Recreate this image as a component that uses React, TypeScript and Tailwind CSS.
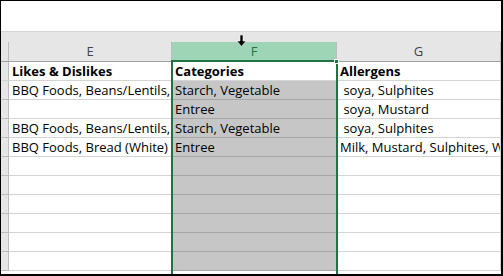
import React from 'react';

const rows: [string, string, string][] = [
  ['BBQ Foods, Beans/Lentils,', 'Starch, Vegetable', '\u00a0soya, Sulphites'],
  ['', 'Entree', '\u00a0soya, Mustard'],
  ['BBQ Foods, Beans/Lentils,', 'Starch, Vegetable', '\u00a0soya, Sulphites'],
  ['BBQ Foods, Bread (White)', 'Entree', 'Milk, Mustard, Sulphites, Wheat'],
  ['', '', ''],
  ['', '', ''],
  ['', '', ''],
  ['', '', ''],
  ['', '', ''],
  ['', '', ''],
];

const cell = 'h-full overflow-hidden whitespace-nowrap pl-[3px] leading-[18px]';

export default function App() {
  return (
    <div className="relative w-[503px] h-[276px] overflow-hidden bg-white border-l border-t border-r-2 border-b-2 border-black flex flex-col text-[13px] text-black font-['Open_Sans',sans-serif]">
      <div className="h-[31px] shrink-0 bg-white border-b border-[#d4d4d4]" />
      <div className="h-[10px] shrink-0 bg-[#e6e6e6]" />

      {/* column headers */}
      <div className="h-[20px] shrink-0 flex bg-[#e6e6e6] border-b border-[#a0a0a0] text-[#444]">
        <div className="w-[8px] border-r border-[#bdbdbd]" />
        <div className="w-[163px] border-r border-[#bdbdbd] flex items-center justify-center">E</div>
        <div className="w-[165px] bg-[#9fd5b7] border-r border-[#bdbdbd] flex items-center justify-center text-[#217346]">F</div>
        <div className="w-[164px] border-r border-[#bdbdbd] flex items-center justify-center">G</div>
      </div>

      {/* header row */}
      <div className="h-[19px] shrink-0 flex border-b border-[#d4d4d4] font-bold">
        <div className="w-[8px] bg-[#e6e6e6] border-r border-[#bdbdbd]" />
        <div className={`w-[163px] border-r border-[#d4d4d4] ${cell}`}>Likes &amp; Dislikes</div>
        <div className={`w-[165px] border-r border-[#d4d4d4] ${cell}`}>Categories</div>
        <div className={`w-[164px] border-r border-[#d4d4d4] ${cell}`}>Allergens</div>
      </div>

      {rows.map((r, i) => (
        <div key={i} className="h-[19px] shrink-0 flex">
          <div className="w-[8px] bg-[#e6e6e6] border-r border-b border-[#bdbdbd]" />
          <div className={`w-[163px] border-r border-b border-[#d4d4d4] ${cell}`}>{r[0]}</div>
          <div className={`w-[165px] bg-[#c6c6c6] border-r border-b border-[#a6a6a6] ${cell}`}>{r[1]}</div>
          <div className={`w-[164px] border-r border-b border-[#d4d4d4] ${cell}`}>{r[2]}</div>
        </div>
      ))}

      {/* selection outline */}
      <div className="absolute left-[170px] top-[59px] w-[167px] h-[240px] border-2 border-[#217346]" />
      <div className="absolute left-[333px] top-[58px] w-[5px] h-[5px] bg-[#217346] border border-white" />

      {/* column-select cursor */}
      <svg className="absolute left-[236px] top-[34px]" width="9" height="12" viewBox="0 0 9 12">
        <path d="M3 0h3v6h3l-4.5 5.5L0 6h3z" fill="#000" stroke="#fff" strokeWidth="0.6" />
      </svg>
    </div>
  );
}
